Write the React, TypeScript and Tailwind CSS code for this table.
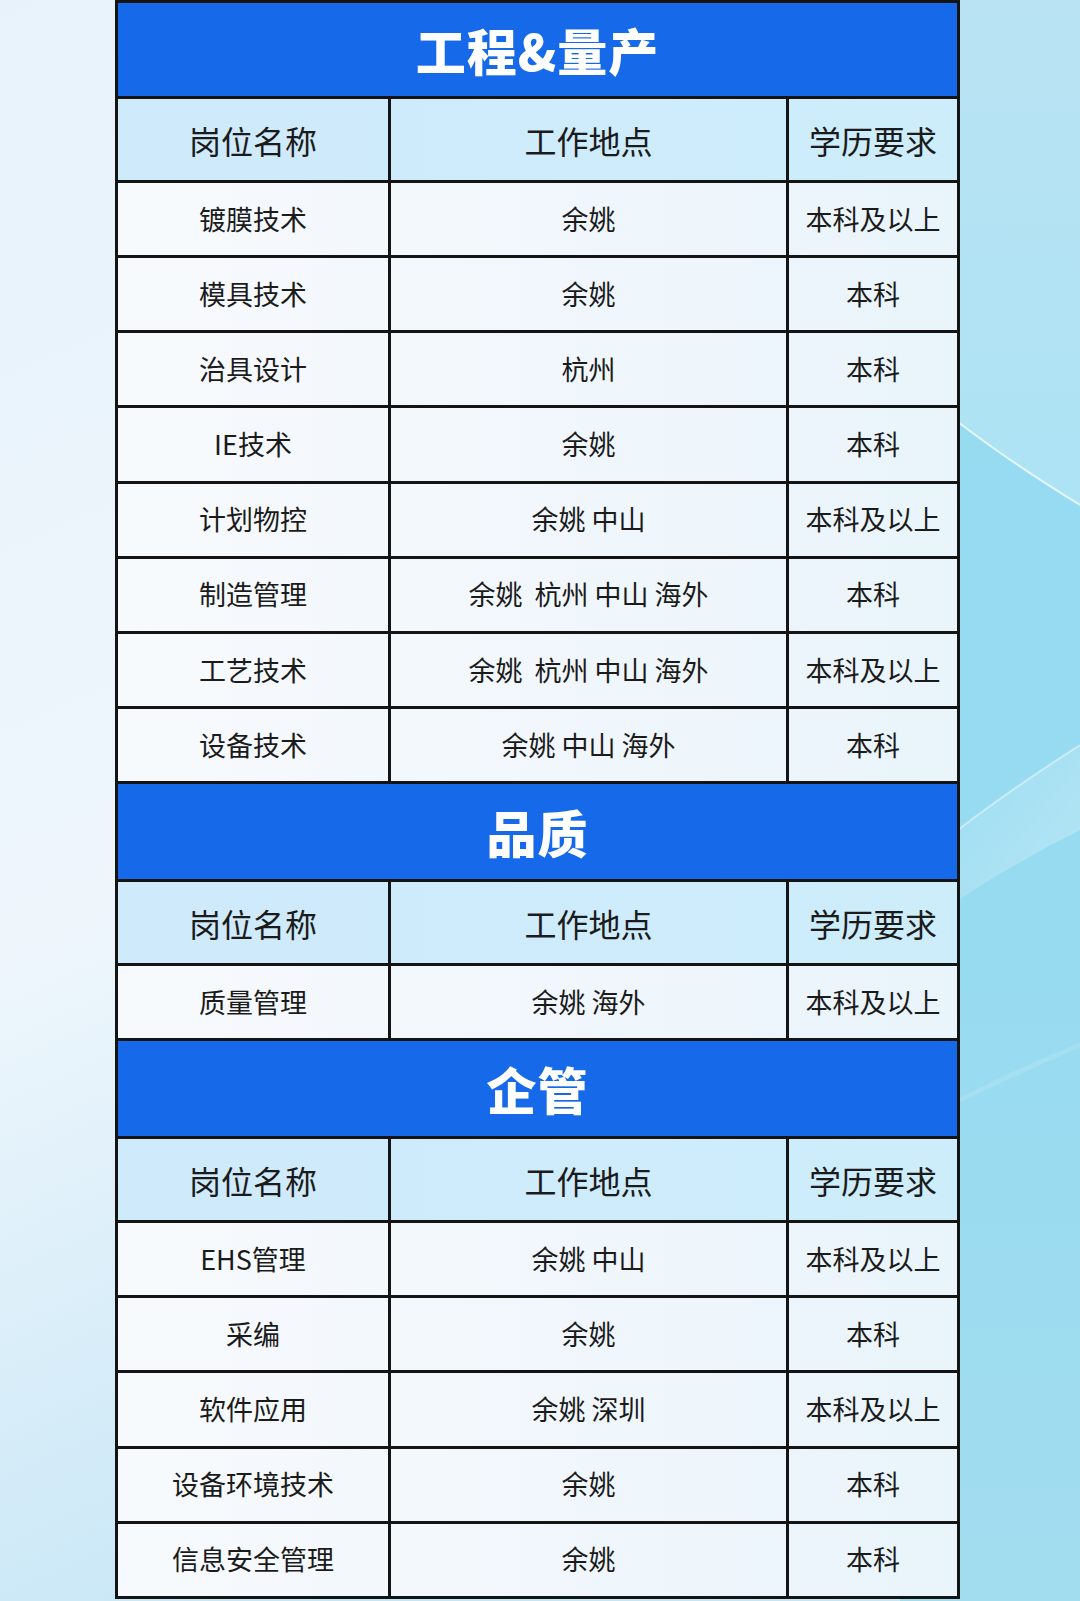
import React from "react";

type Row = [string, string, string];

const sections: { title: string; rows: Row[] }[] = [
  {
    title: "工程&量产",
    rows: [
      ["镀膜技术", "余姚", "本科及以上"],
      ["模具技术", "余姚", "本科"],
      ["治具设计", "杭州", "本科"],
      ["IE技术", "余姚", "本科"],
      ["计划物控", "余姚 中山", "本科及以上"],
      ["制造管理", "余姚  杭州 中山 海外", "本科"],
      ["工艺技术", "余姚  杭州 中山 海外", "本科及以上"],
      ["设备技术", "余姚 中山 海外", "本科"],
    ],
  },
  {
    title: "品质",
    rows: [["质量管理", "余姚 海外", "本科及以上"]],
  },
  {
    title: "企管",
    rows: [
      ["EHS管理", "余姚 中山", "本科及以上"],
      ["采编", "余姚", "本科"],
      ["软件应用", "余姚 深圳", "本科及以上"],
      ["设备环境技术", "余姚", "本科"],
      ["信息安全管理", "余姚", "本科"],
    ],
  },
];

const font = { fontFamily: '"Noto Sans CJK SC", "Noto Sans", sans-serif' };

function Background() {
  return (
    <svg
      className="absolute inset-0"
      width="1080"
      height="1601"
      viewBox="0 0 1080 1601"
    >
      <defs>
        <linearGradient id="left" x1="0" y1="0" x2="0.3" y2="1">
          <stop offset="0" stopColor="#e7f2fb" />
          <stop offset="0.55" stopColor="#eef6fc" />
          <stop offset="1" stopColor="#c6e6f6" />
        </linearGradient>
        <linearGradient id="right" x1="0" y1="0" x2="0" y2="1">
          <stop offset="0" stopColor="#a6dcf0" />
          <stop offset="0.3" stopColor="#96dbf1" />
          <stop offset="0.6" stopColor="#97dbf1" />
          <stop offset="1" stopColor="#a2dcef" />
        </linearGradient>
        <linearGradient id="wedge" x1="0" y1="0" x2="1" y2="1">
          <stop offset="0" stopColor="#ffffff" stopOpacity="0.05" />
          <stop offset="1" stopColor="#ffffff" stopOpacity="0.3" />
        </linearGradient>
      </defs>
      <rect x="0" y="0" width="1080" height="1601" fill="url(#left)" />
      <rect x="900" y="0" width="180" height="1601" fill="url(#right)" />
      <path d="M900,0 L1080,0 L1080,505 Q1010,462 958,422 L900,375 Z" fill="#ffffff" fillOpacity="0.22" />
      <path d="M958,422 Q1010,462 1080,505" stroke="#ffffff" strokeOpacity="0.7" strokeWidth="2" fill="none" />
      <path d="M958,830 Q1010,790 1080,745 L1080,830 Q1020,860 958,900 Z" fill="url(#wedge)" />
      <path d="M958,830 Q1010,790 1080,745" stroke="#ffffff" strokeOpacity="0.45" strokeWidth="2" fill="none" />
      <path d="M960,1100 Q1020,1070 1080,1045" stroke="#ffffff" strokeOpacity="0.12" strokeWidth="5" fill="none" />
    </svg>
  );
}

function HeaderRow() {
  return (
    <div className="grid grid-cols-[273px_398px_1fr] h-[84px] border-b-[3px] border-[#141414] bg-gradient-to-r from-[#cfeafb] to-[#cdedfb] text-[32px] text-[#1b1b1b] font-normal">
      <div className="flex items-center justify-center border-r-[3px] border-[#141414]">岗位名称</div>
      <div className="flex items-center justify-center border-r-[3px] border-[#141414]">工作地点</div>
      <div className="flex items-center justify-center">学历要求</div>
    </div>
  );
}

function DataRow({ row }: { row: Row }) {
  return (
    <div className="grid grid-cols-[273px_398px_1fr] h-[75.14px] border-b-[3px] border-[#141414] bg-gradient-to-r from-[#f7fafd] via-[#f1f7fc] to-[#e9f4fb] text-[27px] text-[#1b1b1b]">
      <div className="flex items-center justify-center border-r-[3px] border-[#141414]">{row[0]}</div>
      <div className="flex items-center justify-center border-r-[3px] border-[#141414] whitespace-pre">{row[1]}</div>
      <div className="flex items-center justify-center">{row[2]}</div>
    </div>
  );
}

export default function App() {
  return (
    <div className="relative w-[1080px] h-[1601px] overflow-hidden bg-[#e8f3fb]" style={font}>
      <Background />
      <div className="relative ml-[115px] w-[845px] border-x-[3px] border-t-[3px] border-[#141414]">
        {sections.map((s, i) => (
          <div key={s.title}>
            <div
              className={
                "flex items-center justify-center border-b-[3px] border-[#141414] bg-[#1669e8] text-white text-[50px] font-black tracking-[1px] " +
                (i === 0 ? "h-[96px]" : "h-[98px]")
              }
            >
              {s.title}
            </div>
            <HeaderRow />
            {s.rows.map((r) => (
              <DataRow key={r[0]} row={r} />
            ))}
          </div>
        ))}
      </div>
    </div>
  );
}
